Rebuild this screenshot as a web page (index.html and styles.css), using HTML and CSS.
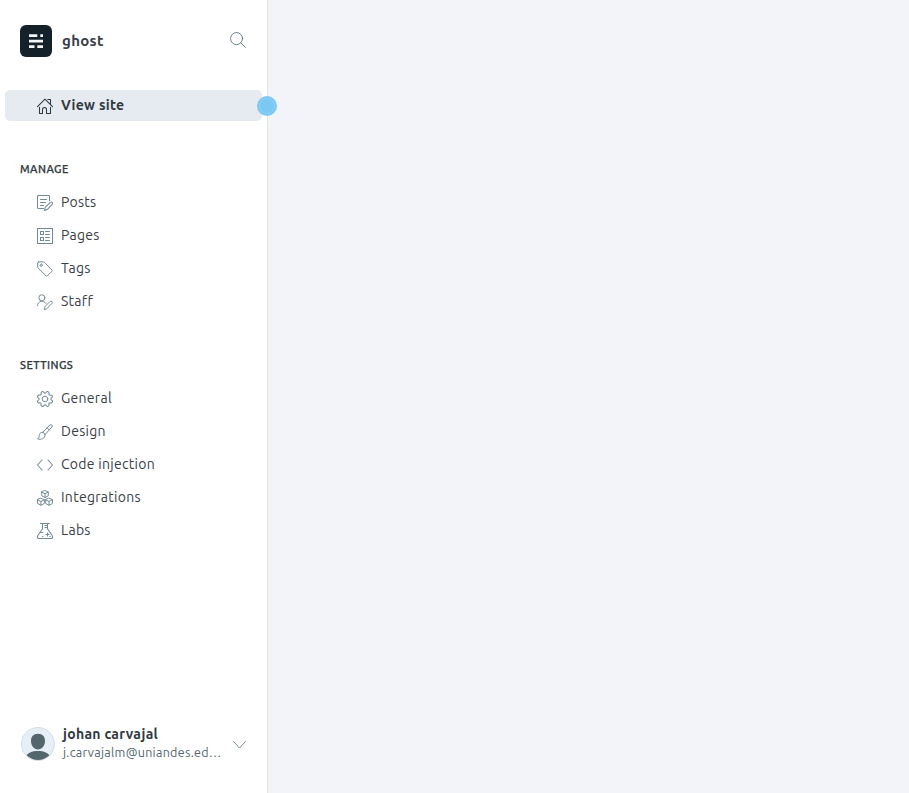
FILE: index.html
```html
<!DOCTYPE html>
<html lang="en">
<head>
<meta charset="utf-8">
<title>ghost</title>
<link rel="stylesheet" href="styles.css">
</head>
<body>
<div class="app">
  <aside class="sidebar">
    <header class="brand">
      <svg class="logo" viewBox="0 0 32 32"><rect width="32" height="32" rx="6" fill="#15212a"/><path fill="#f4f5f6" d="M9 9.300h8.300v2.700H9zM20.300 9.300H23v2.700h-2.700zM9 14.800h14v2.600H9zM9 20.200h5.500v2.700H9zM17.300 20.200H23v2.700h-5.700z"/></svg>
      <span class="site-name">ghost</span>
      <svg class="search" viewBox="0 0 17 17"><circle cx="7" cy="7" r="6.400"/><path d="M11.500 11.500 16.300 16.300"/></svg>
    </header>
    <a class="item view-site"><svg class="icon" viewBox="0 0 16 16"><path d="M.5 8.700 8 1.200l7.500 7.500M10.800 1.500h2.700v4.700M2.500 9.200v6.300h3v-4c0-2.700 4-2.700 4 0v4h4V9.200"/></svg><span>View site</span></a>
    <nav class="group manage">
      <h2>MANAGE</h2>
      <a class="item"><svg class="icon" viewBox="0 0 16 16"><path d="M6.500 13.500h-5q-1 0-1-1v-11q0-1 1-1h10q1 0 1 1v4.300M3.500 4.500h6M3.500 7.500h5M3.500 10.500h3M7.500 15.400l.8-3 5-5c1.200-1 2.900.6 1.900 1.900l-5 5.300z"/></svg><span>Posts</span></a>
      <a class="item"><svg class="icon" viewBox="0 0 16 16"><path d="M.5.500h15v15H.5zM3.500 3.500h3v3h-3zM3.500 9.500h3v3h-3zM8.500 3.500h4M8.500 6.500h4M8.500 9.500h4M8.500 12.500h4"/></svg><span>Pages</span></a>
      <a class="item"><svg class="icon" viewBox="0 0 17 17"><path d="M1.500.9h5.300q.6 0 1 .4l8.100 8.200q.7.700 0 1.400L11 15.800q-.7.700-1.400 0L1.200 7.500q-.5-.5-.5-1.100V1.800q0-.9.800-.9z"/><circle cx="4.500" cy="4.500" r="1.200"/></svg><span>Tags</span></a>
      <a class="item"><svg class="icon" viewBox="0 0 17 17"><circle cx="5.200" cy="4" r="3.200"/><path d="M.5 12.500C.5 6.800 7.500 6.300 9.500 10M7.800 16.300l.8-3.100 5.300-5.300c1.300-1.100 3.100.7 2 2l-5.300 5.500z"/></svg><span>Staff</span></a>
    </nav>
    <nav class="group settings">
      <h2>SETTINGS</h2>
      <a class="item"><svg class="icon" viewBox="0 0 17 17"><path transform="translate(8.500 8.500) rotate(22.500) scale(1.070) translate(-8.500 -8.500)" d="M6.900 2.100c.3-2 2.900-2 3.200 0 .2 1.100 1 1.400 1.900.8 1.600-1.100 3.200.5 2.100 2.100-.6.900-.3 1.700.8 1.900 2 .3 2 2.900 0 3.200-1.100.2-1.400 1-.8 1.900 1.100 1.600-.5 3.200-2.100 2.100-.9-.6-1.700-.3-1.900.8-.3 2-2.900 2-3.200 0-.2-1.100-1-1.400-1.900-.8-1.600 1.100-3.200-.5-2.100-2.100.6-.9.300-1.700-.8-1.900-2-.3-2-2.900 0-3.200 1.100-.2 1.400-1 .8-1.900C1.800 3.400 3.400 1.800 5 2.900c.9.600 1.700.3 1.900-.8z"/><circle cx="8.500" cy="8.500" r="3"/></svg><span>General</span></a>
      <a class="item"><svg class="icon" viewBox="0 0 17 17"><path d="M6.200 8.800 13.700 1.100c1.400-1.200 3.400.5 2.200 2.100l-7.300 8M6.200 8.800q2 .6 2.400 2.400M6.200 8.800c-3 0-3.700 1.800-3.800 3.600Q2.300 14.900.6 15.900c3.600.8 8.200.1 8-4.700M10.800 4.100l2.100 2.200"/></svg><span>Design</span></a>
      <a class="item"><svg class="icon" viewBox="0 0 16 16"><path d="M5 3 .5 8 5 13M11 3l4.500 5-4.500 5"/></svg><span>Code injection</span></a>
      <a class="item"><svg class="icon" viewBox="0 0 17 17"><path d="m8.500.6 3.500 1.500v4L8.500 8 5 6.100v-4zM5 2.200 8.500 4 12 2.200M8.500 4v4M4.200 8.800l3.600 1.500v4l-3.600 1.900-3.600-1.900v-4zM.6 10.400l3.600 1.800 3.600-1.800M4.200 12.200v4M12.800 8.800l3.600 1.500v4l-3.600 1.900-3.600-1.900v-4zM9.200 10.400l3.600 1.800 3.600-1.800M12.800 12.200v4"/></svg><span>Integrations</span></a>
      <a class="item"><svg class="icon" viewBox="0 0 16 16"><path d="M3.500.5h9M5.500.5v5.300L.8 12.500q-1 3 1.200 3h12q2.200 0 1.200-3L10.500 5.800V.5M8 2.500h2.500M8 4.500h2.500M3.500 9.500H6M10.500 10v3M9 11.500h3M5.500 13.500h.5M13 13.500h.3"/></svg><span>Labs</span></a>
    </nav>
    <footer class="user">
      <svg class="avatar" viewBox="0 0 34 34"><defs><clipPath id="avatar-clip"><circle cx="17" cy="17" r="16"/></clipPath></defs><circle cx="17" cy="17" r="16.500" fill="#e5eff5" stroke="#d5dfe6"/><g fill="#54666d" clip-path="url(#avatar-clip)"><path d="M17 6.700c4.700 0 7 3 7 7.300 0 4.500-3 8.500-7 8.500s-7-4-7-8.500c0-4.300 2.300-7.300 7-7.300zM4.500 30c2-4.300 6.500-6 12.500-6s10.500 1.700 12.500 6v4h-25z"/></g></svg>
      <div class="identity"><strong>johan carvajal</strong><small>j.carvajalm@uniandes.ed…</small></div>
      <svg class="chevron" viewBox="0 0 13 8"><path d="m.5.500 6 6.500 6-6.500"/></svg>
    </footer>
    <i class="marker"></i>
  </aside>
  <main class="content"></main>
</div>
</body>
</html>
```
FILE: styles.css
```css
* { box-sizing: border-box; }
body { margin: 0; font-family: Ubuntu, "Noto Sans", sans-serif; color: #394047; }
.app { display: flex; height: 793px; }
.sidebar { position: relative; display: flex; flex-direction: column; width: 268px; border-right: 1px solid #e3e5ee; background: #fff; }
.content { flex: 1; background: #f2f4f9; }
svg { display: block; flex: none; fill: none; stroke: #738a94; stroke-linecap: round; stroke-linejoin: round; }
.brand { display: flex; align-items: center; height: 32px; margin: 25px 21px 0 20px; }
.logo { width: 32px; height: 32px; stroke: none; }
.site-name { margin-left: 10px; font-size: 15px; font-weight: 700; line-height: 30px; letter-spacing: .3px; }
.search { width: 16px; height: 16px; margin: 0 0 2px auto; stroke: #637983; }
.item { display: flex; align-items: center; height: 33px; padding-left: 37px; font-size: 14px; letter-spacing: .28px; white-space: nowrap; }
.icon { width: 16px; height: 16px; margin: 3px 8px 0 0; stroke-width: 1.05; }
.item span { line-height: 20px; }
.view-site { height: 31px; margin: 33px 5px 0; padding-left: 32px; border-radius: 5px; background: #e6ebf2; font-weight: 700; color: #303940; }
.view-site .icon { margin-top: 1px; stroke: #303940; }
.view-site span { margin-top: -2px; }
.group h2 { height: 16px; margin: 0 20px 8px; font-size: 11px; line-height: 16px; font-weight: 500; letter-spacing: .45px; color: #303940; -webkit-text-stroke: .25px #303940; }
.manage { margin-top: 40px; }
.settings { margin-top: 40px; }
.user { display: flex; align-items: center; height: 40px; margin: auto 21px 29px; }
.avatar { width: 34px; height: 34px; stroke: none; }
.identity { margin: -2px 0 0 8px; white-space: nowrap; }
.identity strong, .identity small { display: block; line-height: 18px; }
.identity strong { font-size: 14px; letter-spacing: .3px; color: #303940; }
.identity small { font-size: 12.500px; letter-spacing: .3px; color: #54666d; }
.chevron { width: 13px; height: 8px; margin: 1px 0 0 auto; }
.marker { position: absolute; top: 96px; left: 257px; width: 20px; height: 20px; border-radius: 50%; background: #7cc8f4; }
.marker::after { content: ""; position: absolute; inset: 2px; border: 1px solid #8dd0f6; border-radius: 50%; }
```
